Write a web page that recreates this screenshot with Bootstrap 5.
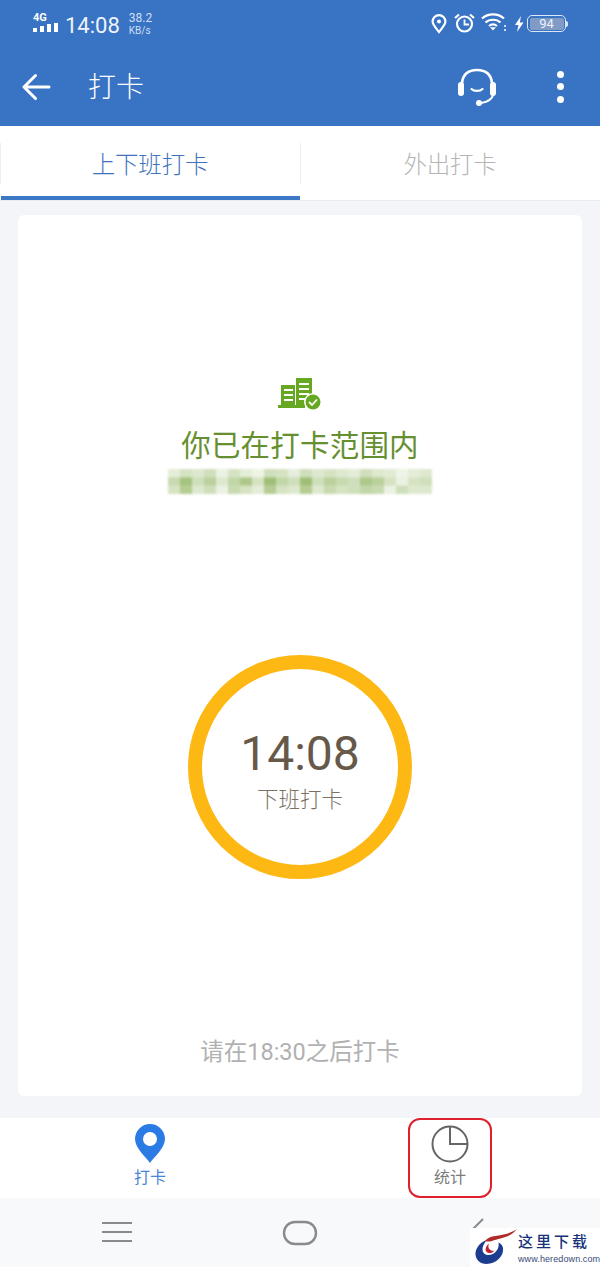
<!DOCTYPE html>
<html lang="zh-CN">
<head>
  <meta charset="UTF-8" />
  <meta name="viewport" content="width=device-width, initial-scale=1.0"/>
  <title>打卡</title>
  <link href="https://cdn.jsdelivr.net/npm/bootstrap@5.3.3/dist/css/bootstrap.min.css" rel="stylesheet"/>
  <style>
    body {
      width: 600px;
      height: 1267px;
      overflow: hidden;
      background-color: #f3f5f8;
      font-family: Roboto, "Noto Sans CJK SC", sans-serif;
      position: relative;
    }
    .top-blue { background-color: #3873c4; color: #fff; height: 126px; }
    .status-row { height: 46px; padding: 10px 32px 0 33px; }
    .net-label { font-size: 11px; font-weight: 700; line-height: 9px; margin: 3px 0 1px; }
    .signal-bars { gap: 3px; height: 9px; }
    .signal-bars i { display: block; width: 4px; background: #fff; }
    .clock-text { font-size: 22px; line-height: 24px; margin: 4px 0 0 7px; color: #eef3fb; }
    .speed-text { font-size: 12px; line-height: 12px; margin: 2px 0 0 9px; color: #cfdff4; }
    .speed-text span { font-size: 10px; }
    .st-pin { margin-top: 4px; }
    .st-alarm { margin: 3px 0 0 7px; }
    .st-wifi { margin: 2px 0 0 6px; }
    .st-bolt { margin: 5px 0 0 7px; }
    .st-battery { margin: 5px 0 0 3px; }
    .battery-box { width: 39px; height: 17px; border: 1.5px solid #dbe6f6; border-radius: 5px; padding: 1.5px; }
    .battery-box span { display: block; height: 100%; background: #7f9bc6; border-radius: 2px; font-size: 13px; line-height: 11px; text-align: center; color: #eef3fb; }
    .battery-tip { width: 2px; height: 6px; background: #dbe6f6; border-radius: 0 2px 2px 0; }
    .title-row { height: 80px; padding: 0 0 0 22px; }
    .title-left { margin-top: 2px; }
    .page-title { font-size: 28px; line-height: 36px; margin: 2px 0 0 37px; font-weight: 300; }
    .ic-headset { margin: 1px 60px 0 0; }
    .menu-dots { gap: 5.5px; margin: 1px 36px 0 0; }
    .tab-row { height: 75px; background: #fff; border-bottom: 1px solid #e8ebef; }
    .tab-cell { width: 300px; height: 74px; font-size: 23.5px; font-weight: 300; color: #b5b5b5; letter-spacing: -.2px; position: relative; padding-top: 6px; }
    .tab-cell::before { content: ""; position: absolute; left: 0; top: 17px; width: 1px; height: 41px; background: #eceef1; }
    .tab-cell.on { color: #3f74bd; }
    .tab-cell.on::after { content: ""; position: absolute; left: 1px; right: 0; bottom: 0; height: 4px; background: #3d78c6; }
    .main-sheet { margin: 14px 18px 0; height: 881px; background: #fff; border-radius: 6px; padding-top: 162px; }
    .in-range { font-size: 29.5px; line-height: 38px; color: #66902f; margin-top: 16px; letter-spacing: .2px; }
    .mosaic { display: block; margin-top: 2px; }
    .punch-ring { width: 224px; height: 224px; border: 14px solid #fdb813; border-radius: 50%; margin-top: 159px; padding-top: 4px; }
    .punch-time { font-size: 48px; line-height: 56px; color: #66594a; margin-top: 1px; }
    .punch-label { font-size: 21.5px; line-height: 28px; color: #7a7163; margin-top: 4px; font-weight: 300; }
    .later-note { font-size: 23.5px; line-height: 30px; color: #b1b1b1; margin-top: 158px; }
    .bottom-tabs { height: 80px; margin-top: 22px; background: #fff; }
    .bottom-side { width: 300px; }
    .bottom-item { width: 84px; height: 80px; font-size: 16px; line-height: 20px; padding-top: 6px; }
    .bottom-item.on { color: #4a86d8; }
    .bottom-item.on div { margin-top: 5px; }
    .bottom-item.marked { color: #7b7b7b; border: 2.5px solid #e0202c; border-radius: 12px; padding-top: 5px; }
    .bottom-item.marked div { margin-top: 5px; }
    .sys-nav { height: 70px; background: #f8f9fb; }
    .sys-nav svg { display: block; }
    .sys-menu { margin: -3px 0 0 102px; }
    .sys-home { margin: -1px 0 0 150px; }
    .sys-back { margin: -18px 0 0 154px; }
    .site-mark { position: absolute; right: 0; top: 1228px; width: 130px; height: 39px; background: #fff; }
    .site-mark svg { position: absolute; left: 2px; top: 0; }
    .site-name { position: absolute; left: 48px; top: 3px; font-size: 15px; line-height: 22px; font-weight: 500; color: #16327a; letter-spacing: 3px; white-space: nowrap; }
    .site-url { position: absolute; left: 48px; top: 25px; font-family: "Liberation Sans", sans-serif; font-size: 9px; line-height: 12px; color: #3a4a78; letter-spacing: .1px; white-space: nowrap; }
  </style>
</head>
<body>
  <div class="top-blue">
    <div class="status-row d-flex justify-content-between">
      <div class="d-flex align-items-start">
        <div>
          <div class="net-label">4G</div>
          <div class="signal-bars d-flex align-items-end">
            <i style="height:4px"></i><i style="height:6px"></i><i style="height:8px"></i><i style="height:9px"></i>
          </div>
        </div>
        <div class="clock-text">14:08</div>
        <div class="speed-text">38.2<br><span>KB/s</span></div>
      </div>
      <div class="d-flex align-items-start">
        <svg class="st-pin" width="16" height="20" viewBox="0 0 16 20" fill="none" stroke="#fff" stroke-width="2.200"><path d="M8 18C4 13 1.600 10.600 1.600 7.600a6.400 6.400 0 0 1 12.800 0C14.400 10.600 12 13 8 18z"/><circle cx="8" cy="7.600" r="2" fill="#fff" stroke="none"/></svg>
        <svg class="st-alarm" width="21" height="20" viewBox="0 0 21 20" fill="none" stroke="#fff" stroke-width="2.200"><circle cx="10.500" cy="11" r="7.500"/><path d="M10.500 6.500V11.500H15" stroke-width="1.800"/><path d="M1 5L5 1.500M20 5L16 1.500" stroke-width="2.200"/></svg>
        <svg class="st-wifi" width="26" height="20" viewBox="0 0 26 20" fill="none" stroke="#fff" stroke-width="2.200"><path d="M1 6.500C7 1 17 1 23 6.500"/><path d="M4.500 10.500C8.500 6.800 15.500 6.800 19.500 10.500"/><path d="M8 14C10.500 12 13.500 12 16 14"/><path d="M12 18.500L9 15.200H15Z" fill="#fff" stroke="none"/><path d="M24 13v2M24 17v2" stroke-width="1.500"/></svg>
        <svg class="st-bolt" width="10" height="18" viewBox="0 0 10 18" fill="#fff"><path d="M7 1L1 10H4.500L3 17L9.500 7.500H5.800Z"/></svg>
        <div class="st-battery d-flex align-items-center">
          <div class="battery-box"><span>94</span></div><div class="battery-tip"></div>
        </div>
      </div>
    </div>
    <div class="title-row d-flex align-items-center justify-content-between">
      <div class="title-left d-flex align-items-center">
        <svg width="29" height="28" viewBox="0 0 29 28" fill="none" stroke="#fff" stroke-width="3" stroke-linecap="round" stroke-linejoin="round"><path d="M27 14H2.500M13.500 2.500L2 14L13.500 25.500"/></svg>
        <h1 class="page-title">打卡</h1>
      </div>
      <div class="d-flex align-items-center">
        <svg class="ic-headset" width="40" height="38" viewBox="0 0 40 38" fill="none" stroke="#fff"><path d="M5 15C6 6 12 2 20 2C28 2 34 6 35 15" stroke-width="2.600"/><rect x="1" y="14" width="6" height="14" rx="3" fill="#fff" stroke="none"/><rect x="33" y="14" width="6" height="14" rx="3" fill="#fff" stroke="none"/><path d="M14.500 21C17 23.500 23 23.500 25.500 21" stroke-width="2.200" stroke-linecap="round"/><path d="M36 27C35 32 30 34 24 35" stroke-width="2"/><circle cx="22" cy="35" r="3" fill="#fff" stroke="none"/></svg>
        <div class="menu-dots d-flex flex-column align-items-center">
          <svg width="7" height="7" class="d-block"><circle cx="3.500" cy="3.500" r="3.500" fill="#fff"/></svg>
          <svg width="7" height="7" class="d-block"><circle cx="3.500" cy="3.500" r="3.500" fill="#fff"/></svg>
          <svg width="7" height="7" class="d-block"><circle cx="3.500" cy="3.500" r="3.500" fill="#fff"/></svg>
        </div>
      </div>
    </div>
  </div>

  <div class="tab-row d-flex">
    <div class="tab-cell on d-flex align-items-center justify-content-center">上下班打卡</div>
    <div class="tab-cell d-flex align-items-center justify-content-center">外出打卡</div>
  </div>

  <div class="main-sheet d-flex flex-column align-items-center">
    <svg width="46" height="34" viewBox="0 0 46 34" class="d-block">
      <path d="M1 28H28V31H1Z M4 8H18V28H4Z M19 1H35V28H19Z" fill="#66a821"/>
      <path d="M7 13h9M7 18h9M7 23h9M22 7h10M22 12h10M22 17h10M22 22h10" stroke="#fff" stroke-width="2"/>
      <circle cx="36" cy="25" r="9" fill="#fff"/>
      <circle cx="36" cy="25" r="7.500" fill="#66a821"/>
      <path d="M32 25L35 28L40 22.500" fill="none" stroke="#fff" stroke-width="1.800"/>
    </svg>
    <div class="in-range">你已在打卡范围内</div>
    <svg class="mosaic" width="268" height="29" viewBox="-2 -2 268 29" id="blurBox"><defs><filter id="soft" x="-5%" y="-20%" width="110%" height="140%"><feGaussianBlur stdDeviation="1.300"/></filter></defs><g id="blurCells" filter="url(#soft)"></g></svg>

    <div class="punch-ring d-flex flex-column align-items-center justify-content-center">
      <div class="punch-time">14:08</div>
      <div class="punch-label">下班打卡</div>
    </div>

    <div class="later-note">请在18:30之后打卡</div>
  </div>

  <div class="bottom-tabs d-flex">
    <div class="bottom-side d-flex justify-content-center">
      <div class="bottom-item on d-flex flex-column align-items-center">
        <svg width="30" height="39" viewBox="0 0 30 39" class="d-block"><path fill-rule="evenodd" d="M15 39C11 33 0 24 0 15a15 15 0 0 1 30 0C30 24 19 33 15 39ZM15 8a7 7 0 1 0 0 14 7 7 0 0 0 0-14Z" fill="#2a7be4"/></svg>
        <div>打卡</div>
      </div>
    </div>
    <div class="bottom-side d-flex justify-content-center">
      <div class="bottom-item marked d-flex flex-column align-items-center">
        <svg width="38" height="38" viewBox="0 0 38 38" fill="none" stroke="#666" stroke-width="2" class="d-block"><circle cx="19" cy="19" r="17.500"/><path d="M19 1.500V19H36.500"/></svg>
        <div>统计</div>
      </div>
    </div>
  </div>

  <div class="sys-nav d-flex align-items-center">
    <svg class="sys-menu" width="30" height="21" viewBox="0 0 30 21" fill="none" stroke="#8a8a8a" stroke-width="2"><path d="M0 2H30M0 11H30M0 20H30"/></svg>
    <svg class="sys-home" width="36" height="26" viewBox="0 0 36 26" fill="none" stroke="#8a8a8a" stroke-width="2.400"><rect x="2" y="2" width="32" height="22" rx="11"/></svg>
    <svg class="sys-back" width="14" height="12" viewBox="0 0 14 12" fill="none" stroke="#8a8a8a" stroke-width="2"><path d="M1 11L11 1"/></svg>
  </div>

  <div class="site-mark">
    <svg width="48" height="39" viewBox="0 0 48 39">
      <path d="M15 12C6 15 2 23 4 29C6 35 12 37 18 35.500C26 34 32 27 31 20C30.500 17.500 29 15.500 26.500 14.500C28 21 22 28 15 27C9 26 9 18 15 12Z" fill="#1c3c90"/>
      <path d="M17 15.500C13 19 12 24 17 25C19 25.200 21 24.500 22 23C18 23 15 20 17 15.500Z" fill="#c02030"/>
      <path d="M13 13C19 5 32 10 45 1C38 10 27 10 20 13C18 13.500 15 14 13 13Z" fill="#b02a2a"/>
    </svg>
    <div class="site-name">这里下载</div>
    <div class="site-url">www.heredown.com</div>
  </div>

  <script src="https://cdn.jsdelivr.net/npm/bootstrap@5.3.3/dist/js/bootstrap.bundle.min.js"></script>
  <script>
    // address is blurred in the source, rebuild the mosaic from a block list
    const blurCells = document.getElementById('blurCells');
    const shades = [
      [.2,.3,.25,.35,.15,.3,.2,.12,.35,.3,.18,.35,.25,.3,.25,.2,.35,.25,.22,.12,.2,.25],
      [.4,.65,.35,.5,.25,.45,.6,.3,.7,.45,.35,.7,.35,.5,.4,.35,.6,.5,.3,.15,.3,.35],
      [.3,.55,.25,.35,.15,.4,.3,.2,.55,.3,.25,.55,.25,.4,.3,.35,.45,.4,.15,.35,.25,.25]
    ];
    shades.forEach((row, y) => {
      row.forEach((a, x) => {
        const r = document.createElementNS('http://www.w3.org/2000/svg', 'rect');
        r.setAttribute('x', x * 12);
        r.setAttribute('y', y * 8.33);
        r.setAttribute('width', 12);
        r.setAttribute('height', 8.33);
        r.setAttribute('fill', '#76a33a');
        r.setAttribute('fill-opacity', a);
        blurCells.appendChild(r);
      });
    });
  </script>
</body>
</html>
